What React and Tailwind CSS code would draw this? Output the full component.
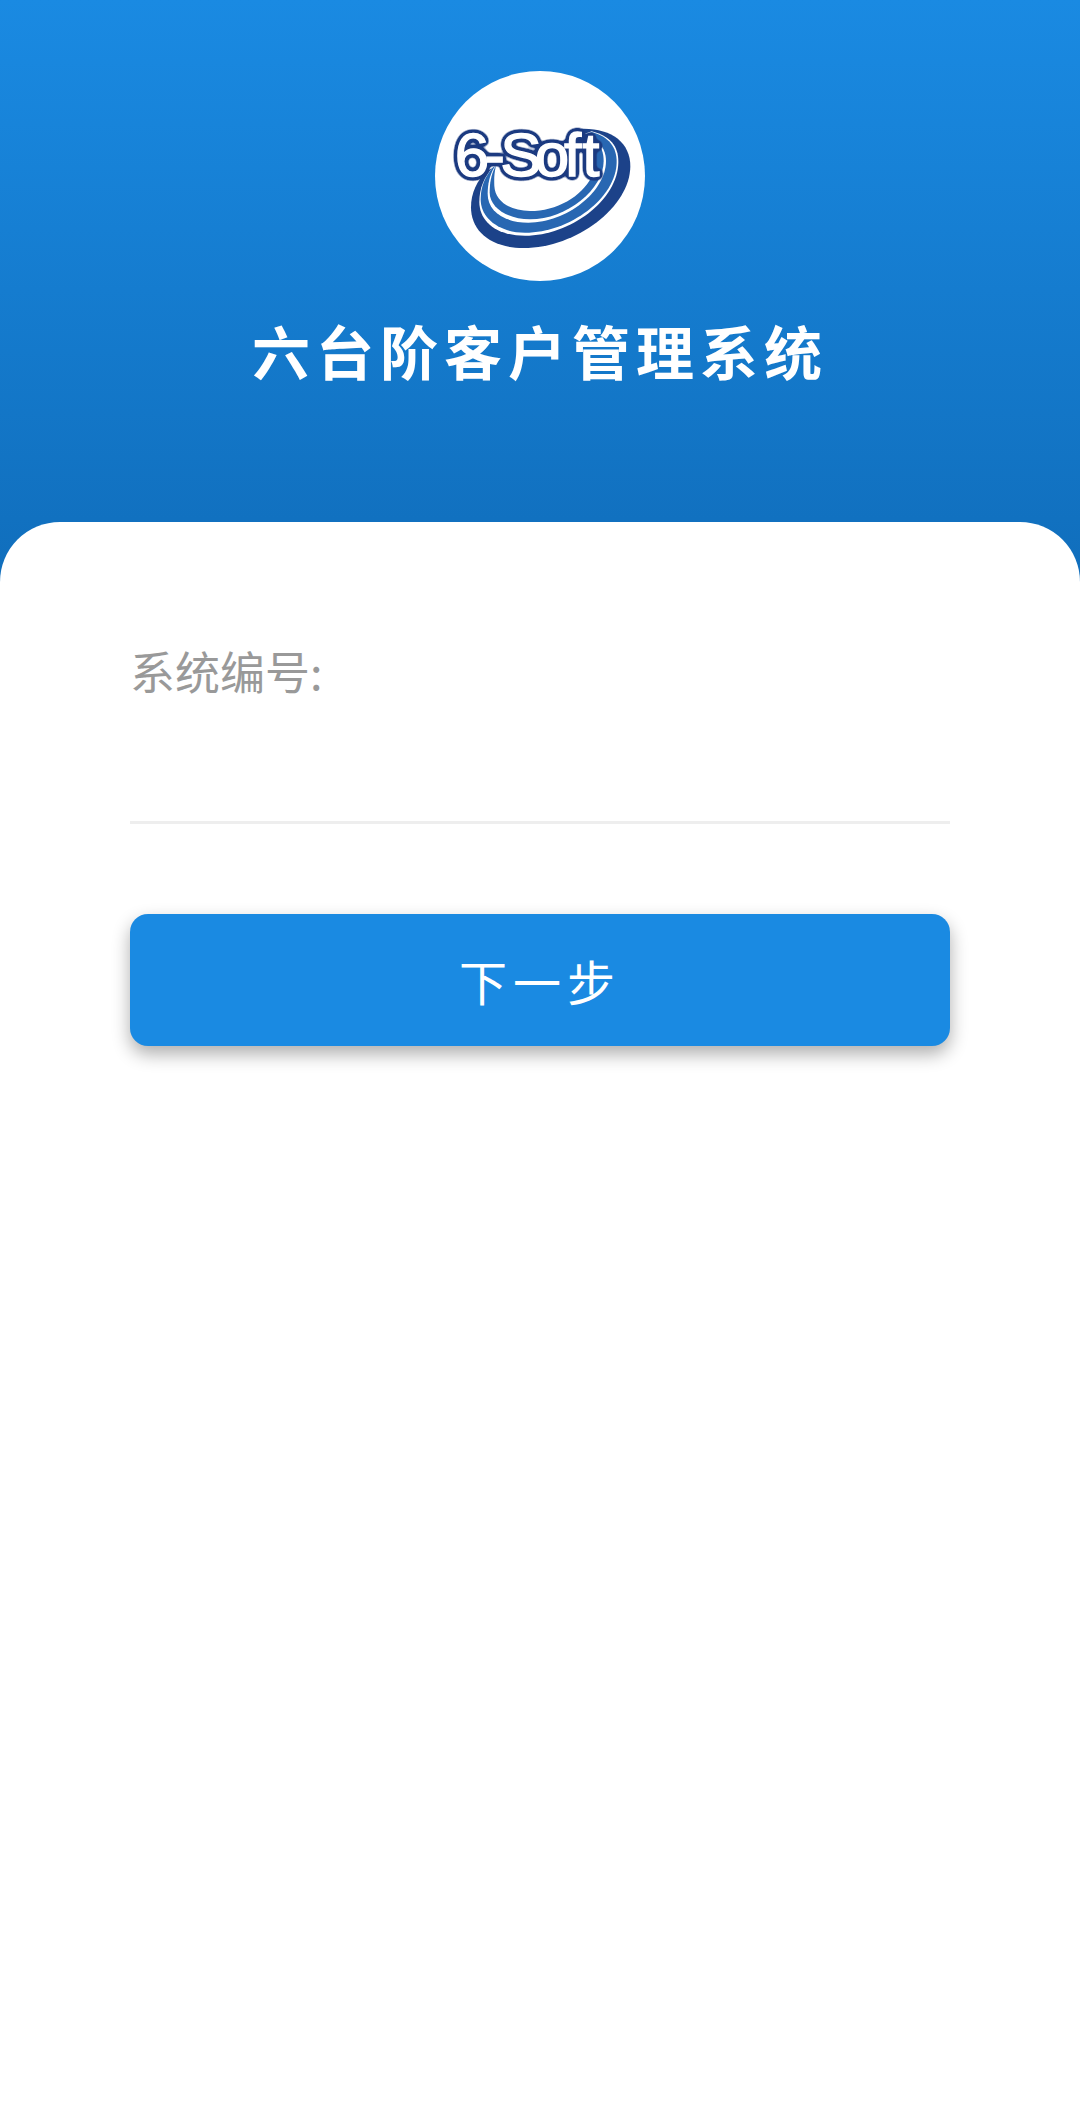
import React from "react";

function Logo() {
  return (
    <svg viewBox="30 33 630 630" className="size-full" role="img" aria-label="6-Soft">
      <defs>
        <filter id="outline" filterUnits="userSpaceOnUse" x="60" y="160" width="520" height="240" colorInterpolationFilters="sRGB">
          <feGaussianBlur in="SourceAlpha" stdDeviation="8" />
          <feComponentTransfer result="grown">
            <feFuncA type="linear" slope="12" intercept="-0.4" />
          </feComponentTransfer>
          <feFlood floodColor="#1b3a80" />
          <feComposite in2="grown" operator="in" result="ring" />
          <feMerge>
            <feMergeNode in="ring" />
            <feMergeNode in="SourceGraphic" />
          </feMerge>
        </filter>
      </defs>
      <path
        d="M470 206C560 204 616 248 616 318C616 440 455 564 295 564C195 564 138 512 138 442C138 400 155 360 190 330Z"
        fill="#1c4289"
      />
      <path
        d="M500 214C555 228 580 258 580 305C580 420 435 527 300 527C215 527 163 485 163 425C163 385 178 350 204 322Z"
        fill="#fff"
      />
      <path
        d="M500 216C552 230 575 262 575 305C575 412 435 518 300 518C222 518 167 475 167 418C167 380 180 350 204 322Z"
        fill="#2867b2"
      />
      <path
        d="M505 230C535 255 543 280 543 303C543 395 425 488 310 488C240 488 188 455 188 402C188 372 194 346 208 322Z"
        fill="#fff"
      />
      <path
        d="M505 230C530 255 536 280 536 303C536 388 425 478 315 478C245 478 194 440 194 398C194 370 198 346 210 322Z"
        fill="#2867b2"
      />
      <path
        d="M500 350C470 410 395 453 315 453C250 453 210 420 208 378C207 356 208 338 212 322L200 195L440 195L475 240L500 290Z"
        fill="#fff"
      />
      <text
        x="89 178 226 329 417 472"
        y="347"
        fontFamily='"Liberation Sans", Arial, sans-serif'
        fontSize="186"
        fill="#fff"
        stroke="#fff"
        strokeWidth="4"
        filter="url(#outline)"
      >
        6-Soft
      </text>
    </svg>
  );
}

export default function App() {
  return (
    <div className="flex min-h-screen flex-col bg-[linear-gradient(to_bottom,#1a8ae2_0px,#106ebc_580px)] font-['Noto_Sans_CJK_SC',sans-serif]">
      <header className="flex flex-col items-center pt-[71px] pb-[126px]">
        <div className="size-[210px] overflow-hidden rounded-full bg-white">
          <Logo />
        </div>
        <h1 className="mt-[23px] text-[58px] leading-[92px] font-bold tracking-[6px] text-white">
          六台阶客户管理系统
        </h1>
      </header>
      <main className="flex-1 rounded-t-[60px] bg-white px-[130px] pt-[115px]">
        <form onSubmit={(e) => e.preventDefault()}>
          <label htmlFor="system-number" className="block text-[45px] leading-[68px] text-[#999999]">
            系统编号:
          </label>
          <input
            id="system-number"
            type="text"
            className="block h-[119px] w-full border-b-[3px] border-[#eeeeee] bg-transparent text-[45px] text-[#333333] outline-none"
          />
          <button
            type="submit"
            className="mt-[90px] block h-[132px] w-full rounded-[18px] bg-[#1a8ae2] text-[48px] tracking-[6px] text-white shadow-[0_8px_18px_rgba(0,0,0,0.32)]"
          >
            下一步
          </button>
        </form>
      </main>
    </div>
  );
}
